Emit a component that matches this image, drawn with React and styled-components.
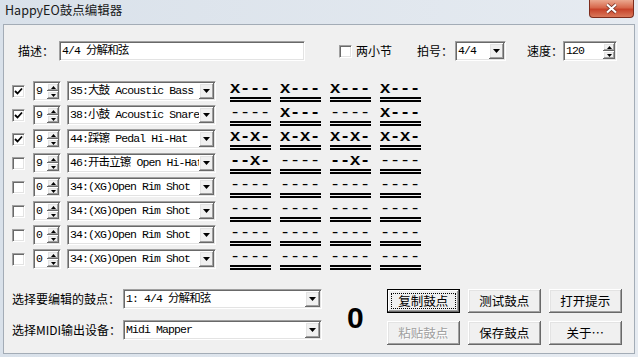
import React from 'react';
import styled, { createGlobalStyle } from 'styled-components';

const GlobalStyle = createGlobalStyle`
  html, body {
    margin: 0;
    padding: 0;
    background: #dde4ec;
  }
  body {
    font-family: "Noto Sans CJK SC", "Noto Sans", sans-serif;
    font-size: 12px;
    color: #000;
  }
`;

const sunken = `
  border: 1px solid;
  border-color: #a0a0a0 #ffffff #ffffff #a0a0a0;
  box-shadow: inset 1px 1px 0 #696969, inset -1px -1px 0 #e3e3e3;
`;

const raised = `
  background: #f0f0f0;
  box-shadow: inset -1px -1px 0 #696969, inset 1px 1px 0 #ffffff,
    inset -2px -2px 0 #a0a0a0, inset 2px 2px 0 #e3e3e3;
`;

const Window = styled.div`
  width: 638px;
  height: 357px;
  box-sizing: border-box;
  padding: 0 3px 3px 3px;
  display: flex;
  flex-direction: column;
  background: linear-gradient(to right, #d9e1ea, #e6ebf1);
`;

const TitleBar = styled.div`
  height: 24px;
  flex: none;
  display: flex;
  align-items: flex-start;
`;

const Title = styled.span`
  margin: 2px 0 0 2px;
  font-size: 12.5px;
  line-height: 16px;
  color: #1a1a1a;
`;

const CloseButton = styled.div`
  width: 45px;
  height: 18px;
  margin: 0 1px 0 auto;
  box-sizing: border-box;
  border: 1px solid #7d2c1c;
  border-top: none;
  border-radius: 0 0 4px 4px;
  background: linear-gradient(#eba88f, #d7684c 45%, #c7432a 55%, #d9785a);
  display: flex;
  align-items: center;
  justify-content: center;
`;

const Client = styled.div`
  flex: 1;
  border: 1px solid #a3acb6;
  background: #f0f0f0;
  display: flex;
  flex-direction: column;
`;

const TopRow = styled.div`
  margin-top: 16px;
  height: 20px;
  padding-left: 14px;
  display: flex;
  align-items: center;
`;

const Label = styled.span`
  margin-left: ${(p) => p.$ml || 0}px;
  width: ${(p) => (p.$w ? `${p.$w}px` : 'auto')};
  flex: none;
  white-space: nowrap;
  line-height: 20px;
`;

const Field = styled.div`
  ${sunken}
  width: ${(p) => p.$w}px;
  height: 20px;
  margin-left: ${(p) => p.$ml || 0}px;
  box-sizing: border-box;
  padding: 1px;
  background: #fff;
  display: flex;
  flex: none;
`;

const FieldText = styled.span`
  flex: 1;
  overflow: hidden;
  white-space: nowrap;
  padding-left: 1px;
  font-family: "Liberation Mono", "Noto Sans CJK SC", monospace;
  font-size: 11.5px;
  letter-spacing: -0.9px;
  line-height: 16px;
`;

const DropButton = styled.span`
  ${raised}
  width: 15px;
  flex: none;
  display: flex;
  align-items: center;
  justify-content: center;
`;

const SpinButtons = styled.span`
  width: 12px;
  flex: none;
  display: flex;
  flex-direction: column;
`;

const SpinButton = styled.span`
  ${raised}
  flex: 1;
  display: flex;
  align-items: center;
  justify-content: center;
`;

const CheckBox = styled.span`
  ${sunken}
  width: 13px;
  height: 13px;
  margin-left: ${(p) => p.$ml || 0}px;
  box-sizing: border-box;
  background: #fff;
  flex: none;
  display: flex;
  align-items: center;
  justify-content: center;
`;

const Tracks = styled.div`
  margin-top: 18px;
  padding-left: 8px;
  display: flex;
  flex-direction: column;
`;

const TrackRow = styled.div`
  height: 24px;
  display: flex;
  align-items: center;
`;

const Patterns = styled.div`
  margin-left: 14px;
  display: flex;
  gap: 9px;
  align-self: flex-start;
`;

const PatternCell = styled.div`
  width: 41px;
  padding-top: 1px;
  display: flex;
  flex-direction: column;
`;

const PatternText = styled.div`
  height: 17px;
  line-height: 17px;
  white-space: pre;
  font-family: "Liberation Mono", monospace;
  font-size: 17px;
  letter-spacing: -0.2px;
`;

const Hit = styled.span`
  display: inline-block;
  font-weight: bold;
  transform: scaleY(0.7);
  transform-origin: 50% 70%;
`;

const Rest = styled.span`
  font-weight: ${(p) => (p.$bold ? 'bold' : 'normal')};
`;

const Bars = styled.div`
  height: 1px;
  border-top: 2px solid #000;
  border-bottom: 2px solid #000;
`;

const Bottom = styled.div`
  margin-top: 18px;
  padding-left: 8px;
  display: flex;
`;

const SelectColumn = styled.div`
  display: flex;
  flex-direction: column;
  gap: 11px;
`;

const SelectRow = styled.div`
  display: flex;
  align-items: center;
`;

const BigNumber = styled.div`
  margin-left: 25px;
  margin-top: 2px;
  align-self: center;
  font-family: "Liberation Sans", Arial, sans-serif;
  font-weight: bold;
  font-size: 30px;
  line-height: 34px;
`;

const ButtonGrid = styled.div`
  margin-left: 23px;
  display: grid;
  grid-template-columns: repeat(3, 73px);
  grid-auto-rows: 24px;
  column-gap: 8px;
  row-gap: 8px;
`;

const PushButton = styled.div`
  ${raised}
  box-sizing: border-box;
  padding: 4px;
  display: flex;
  color: ${(p) => (p.$disabled ? '#a0a0a0' : '#000')};
  text-shadow: ${(p) => (p.$disabled ? '1px 1px 0 #fff' : 'none')};
  ${(p) =>
    p.$focus &&
    `box-shadow: inset 0 0 0 1px #000, inset -2px -2px 0 #696969, inset 2px 2px 0 #fff, inset -3px -3px 0 #a0a0a0;`}
`;

const ButtonLabel = styled.span`
  flex: 1;
  display: flex;
  align-items: center;
  justify-content: center;
  font-size: 12.5px;
  line-height: 14px;
  border: 1px dotted ${(p) => (p.$focus ? '#000' : 'transparent')};
`;

const DownArrow = () => (
  <svg width="7" height="4" viewBox="0 0 7 4">
    <path d="M0 0h7L3.5 4z" fill="#000" />
  </svg>
);

const SpinArrow = ({ up }) => (
  <svg width="5" height="3" viewBox="0 0 5 3">
    <path d={up ? 'M0 3h5L2.5 0z' : 'M0 0h5L2.5 3z'} fill="#000" />
  </svg>
);

const Check = () => (
  <svg width="9" height="9" viewBox="0 0 9 9">
    <path d="M1 4l2.5 2.5L8 1.5" stroke="#000" strokeWidth="1.8" fill="none" />
  </svg>
);

const Select = ({ w, ml, children }) => (
  <Field $w={w} $ml={ml}>
    <FieldText>{children}</FieldText>
    <DropButton>
      <DownArrow />
    </DropButton>
  </Field>
);

const Spinner = ({ w, ml, children }) => (
  <Field $w={w} $ml={ml}>
    <FieldText>{children}</FieldText>
    <SpinButtons>
      <SpinButton>
        <SpinArrow up />
      </SpinButton>
      <SpinButton>
        <SpinArrow />
      </SpinButton>
    </SpinButtons>
  </Field>
);

const rim = { on: false, vol: 0, name: '34:(XG)Open Rim Shot', beats: ['----', '----', '----', '----'] };

const tracks = [
  { on: true, vol: 9, name: '35:大鼓 Acoustic Bass', beats: ['X---', 'X---', 'X---', 'X---'] },
  { on: true, vol: 9, name: '38:小鼓 Acoustic Snare', beats: ['----', 'X---', '----', 'X---'] },
  { on: true, vol: 9, name: '44:踩镲 Pedal Hi-Hat', beats: ['X-X-', 'X-X-', 'X-X-', 'X-X-'] },
  { on: false, vol: 9, name: '46:开击立镲 Open Hi-Hat', beats: ['--X-', '----', '--X-', '----'] },
  rim,
  rim,
  rim,
  rim,
];

const buttons = [
  { label: '复制鼓点', focus: true },
  { label: '测试鼓点' },
  { label: '打开提示' },
  { label: '粘贴鼓点', disabled: true },
  { label: '保存鼓点' },
  { label: '关于…' },
];

const Beat = ({ text }) => {
  const hasHit = text.includes('X');
  return (
    <PatternCell>
      <PatternText>
        {text.split('').map((c, i) =>
          c === 'X' ? (
            <Hit key={i}>X</Hit>
          ) : (
            <Rest key={i} $bold={hasHit}>
              {c}
            </Rest>
          )
        )}
      </PatternText>
      <Bars />
    </PatternCell>
  );
};

const App = () => {
  return (
    <>
      <GlobalStyle />
      <Window>
        <TitleBar>
          <Title>HappyEO鼓点编辑器</Title>
          <CloseButton>
            <svg width="13" height="11" viewBox="0 0 13 11">
              <path d="M2 1.5l9 8M11 1.5l-9 8" stroke="#6b2a1e" strokeWidth="3.6" />
              <path d="M2 1.5l9 8M11 1.5l-9 8" stroke="#fff" strokeWidth="2.2" />
            </svg>
          </CloseButton>
        </TitleBar>
        <Client>
          <TopRow>
            <Label>描述：</Label>
            <Field $w={246} $ml={5}>
              <FieldText>4/4 分解和弦</FieldText>
            </Field>
            <CheckBox $ml={34} />
            <Label $ml={4}>两小节</Label>
            <Label $ml={25}>拍号：</Label>
            <Select w={51} ml={2}>
              4/4
            </Select>
            <Label $ml={21}>速度：</Label>
            <Spinner w={54}>120</Spinner>
          </TopRow>

          <Tracks>
            {tracks.map((t, i) => (
              <TrackRow key={i}>
                <CheckBox>{t.on && <Check />}</CheckBox>
                <Spinner w={28} ml={8}>
                  {t.vol}
                </Spinner>
                <Select w={149} ml={6}>
                  {t.name}
                </Select>
                <Patterns>
                  {t.beats.map((b, j) => (
                    <Beat key={j} text={b} />
                  ))}
                </Patterns>
              </TrackRow>
            ))}
          </Tracks>

          <Bottom>
            <SelectColumn>
              <SelectRow>
                <Label $w={111}>选择要编辑的鼓点：</Label>
                <Select w={199}>1: 4/4 分解和弦</Select>
              </SelectRow>
              <SelectRow>
                <Label $w={111}>选择MIDI输出设备：</Label>
                <Select w={199}>Midi Mapper</Select>
              </SelectRow>
            </SelectColumn>
            <BigNumber>0</BigNumber>
            <ButtonGrid>
              {buttons.map((b) => (
                <PushButton key={b.label} $focus={b.focus} $disabled={b.disabled}>
                  <ButtonLabel $focus={b.focus}>{b.label}</ButtonLabel>
                </PushButton>
              ))}
            </ButtonGrid>
          </Bottom>
        </Client>
      </Window>
    </>
  );
};

export default App;
